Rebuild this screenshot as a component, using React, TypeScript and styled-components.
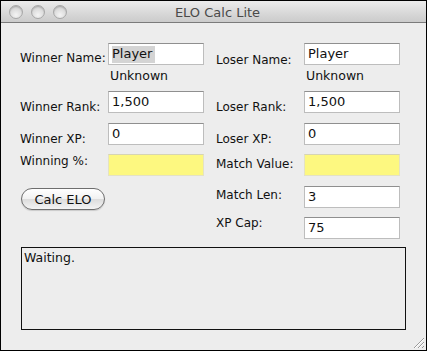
import { createGlobalStyle, styled } from "styled-components"

const GlobalStyle = createGlobalStyle`
  html, body {
    margin: 0;
    padding: 0;
    background: #ffffff;
  }
  * {
    box-sizing: border-box;
  }
`

const App = () => {
  return (
    <>
      <GlobalStyle />
      <Window>
        <TitleBar>
          <Lights>
            <Light />
            <Light />
            <Light />
          </Lights>
          <Title>ELO Calc Lite</Title>
          <span />
        </TitleBar>
        <Body>
          <Form>
            <Label $top={8}>Winner Name:</Label>
            <NameCell>
              <Field>
                <Selected>Player</Selected>
              </Field>
              <Hint>Unknown</Hint>
            </NameCell>
            <span />
            <Label $top={10} $col={4}>Loser Name:</Label>
            <NameCell>
              <Field>Player</Field>
              <Hint>Unknown</Hint>
            </NameCell>

            <Label $top={9}>Winner Rank:</Label>
            <Field>1,500</Field>
            <span />
            <Label $top={9} $col={4}>Loser Rank:</Label>
            <Field>1,500</Field>

            <Label $top={9}>Winner XP:</Label>
            <Field>0</Field>
            <span />
            <Label $top={9} $col={4}>Loser XP:</Label>
            <Field>0</Field>

            <Label $top={0}>Winning %:</Label>
            <Field $tone="yellow" />
            <span />
            <Label $top={3} $col={4}>Match Value:</Label>
            <Field $tone="yellow" />

            <ButtonCell>
              <Button>Calc ELO</Button>
            </ButtonCell>
            <Label $top={2} $col={4}>Match Len:</Label>
            <Field>3</Field>

            <Label $top={-1} $col={4}>XP Cap:</Label>
            <Field>75</Field>
          </Form>
          <Output>Waiting.</Output>
        </Body>
        <Grip width="14" height="14" viewBox="0 0 14 14">
          <path d="M13 3 L3 13 M13 7 L7 13 M13 11 L11 13" stroke="#9a9a9a" strokeWidth="1" />
          <path d="M13 4 L4 13 M13 8 L8 13" stroke="#ffffff" strokeWidth="1" />
        </Grip>
      </Window>
    </>
  )
}

export default App

const font = `"DejaVu Sans", "Liberation Sans", sans-serif`

const Window = styled.div`
  position: relative;
  width: 427px;
  height: 351px;
  border: 1px solid #000;
  background: #ededed;
  font-family: ${font};
  font-size: 12px;
  color: #111;
  overflow: hidden;
`

const TitleBar = styled.div`
  display: grid;
  grid-template-columns: 1fr auto 1fr;
  align-items: center;
  height: 22px;
  padding-left: 8px;
  background: linear-gradient(#ececec, #d9d9d9 55%, #cbcbcb);
  border-bottom: 1px solid #7b7b7b;
`

const Lights = styled.div`
  display: flex;
  gap: 8px;
`

const Light = styled.span`
  width: 14px;
  height: 14px;
  border-radius: 50%;
  border: 1px solid #a8a8a8;
  background: radial-gradient(circle at 50% 75%, #f4f4f4 0%, #dcdcdc 55%, #b9b9b9 100%);
  box-shadow: inset 0 1px 1px rgba(0, 0, 0, 0.15);
`

const Title = styled.span`
  font-size: 13px;
  color: #4a4a4a;
  padding-top: 1px;
`

const Body = styled.div`
  padding: 20px 0 0 19px;
`

const Form = styled.div`
  display: grid;
  grid-template-columns: 88px 96px 12px 88px 96px;
  grid-template-rows: 48px 32px 31px 32px 31px 30px;
  align-items: start;
`

const Label = styled.span<{ $top: number; $col?: number }>`
  grid-column: ${(p) => p.$col ?? 1};
  margin-top: ${(p) => p.$top}px;
  white-space: nowrap;
  line-height: 14px;
`

const NameCell = styled.div`
  display: flex;
  flex-direction: column;
  gap: 4px;
`

const Field = styled.div<{ $tone?: "white" | "yellow" }>`
  height: 22px;
  padding: 2px 0 0 3px;
  line-height: 16px;
  font-size: 13px;
  white-space: nowrap;
  background: ${(p) => (p.$tone === "yellow" ? "#fdf880" : "#ffffff")};
  border: 1px solid ${(p) => (p.$tone === "yellow" ? "#e4e2c4" : "#bdbdbd")};
  border-top-color: ${(p) => (p.$tone === "yellow" ? "#d6d4b4" : "#8f8f8f")};
`

const Selected = styled.span`
  display: inline-block;
  background: #d4d4d4;
  padding: 0 3px 1px 0;
  margin: 0;
`

const Hint = styled.span`
  padding-left: 2px;
  line-height: 14px;
  font-size: 12.5px;
`

const ButtonCell = styled.div`
  grid-column: 1 / span 2;
  padding: 2px 0 0 1px;
`

const Button = styled.button`
  width: 84px;
  height: 22px;
  border-radius: 11px;
  border: 1px solid #6e6e6e;
  background: linear-gradient(#ffffff, #f1f1f1 50%, #dcdcdc 51%, #f4f4f4);
  font-family: ${font};
  font-size: 13px;
  color: #111;
  padding: 0;
  box-shadow: 0 1px 1px rgba(0, 0, 0, 0.15);
`

const Output = styled.div`
  width: 385px;
  height: 83px;
  margin: 0 0 0 1px;
  border: 1px solid #111;
  background: #ededed;
  padding: 3px 2px;
  line-height: 14px;
  font-size: 12.5px;
`

const Grip = styled.svg`
  position: absolute;
  right: 1px;
  bottom: 1px;
`
